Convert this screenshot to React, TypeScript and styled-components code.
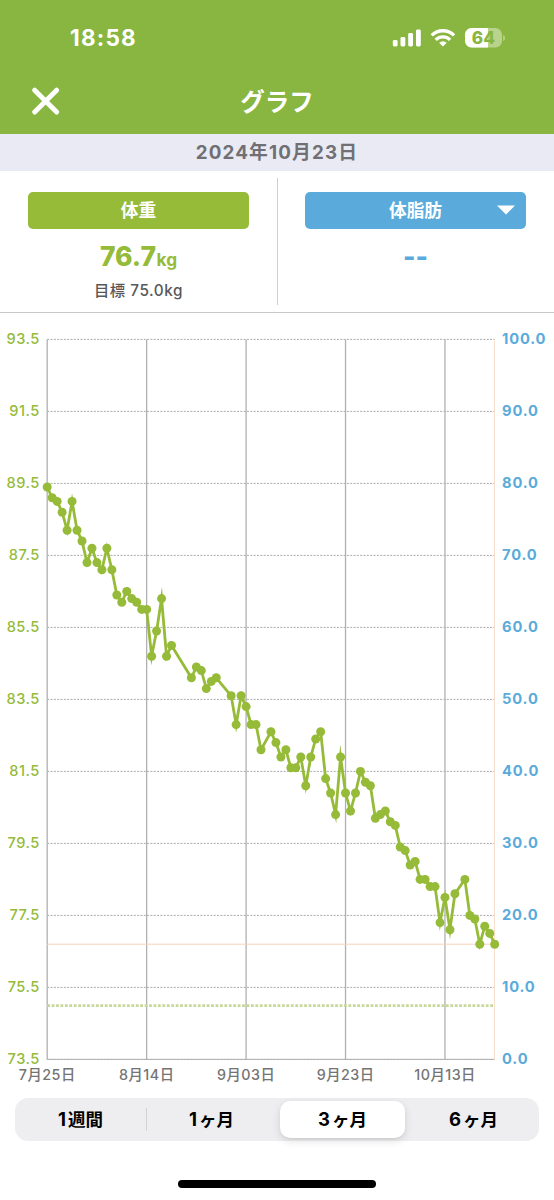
import React from "react";
import styled, { createGlobalStyle } from "styled-components";

const GREEN = "#95bb38";
const BLUE = "#5aabdb";

const GlobalStyle = createGlobalStyle`
  * { box-sizing: border-box; }
  body {
    margin: 0;
    background: #fff;
    font-family: Inter, "Noto Sans CJK JP", sans-serif;
  }
`;

const Screen = styled.main`
  width: 554px;
  height: 1200px;
  display: flex;
  flex-direction: column;
  background: #fff;
  overflow: hidden;
`;

const Header = styled.header`
  height: 134px;
  flex: none;
  background: #89b640;
  color: #fff;
`;

const StatusBar = styled.div`
  height: 68px;
  padding: 8px 49px 0 70px;
  display: flex;
  align-items: center;
  justify-content: space-between;
`;

const Clock = styled.span`
  font-size: 22.5px;
  font-weight: 750;
  line-height: 26px;
  letter-spacing: 1.2px;
`;

const StatusIcons = styled.div`
  display: flex;
  align-items: center;
  gap: 9px;
`;

const NavBar = styled.div`
  height: 66px;
  display: grid;
  grid-template-columns: 92px 1fr 92px;
  align-items: center;
`;

const CloseButton = styled.button`
  border: 0;
  padding: 0 0 0 32px;
  background: none;
  height: 28px;
  display: flex;
`;

const Title = styled.h1`
  margin: 0;
  padding-top: 1px;
  text-align: center;
  font-size: 24.5px;
  line-height: 30px;
  font-weight: 700;
`;

const DateBar = styled.div`
  height: 37px;
  flex: none;
  background: #eaeaf4;
  color: #707074;
  font-size: 18.8px;
  font-weight: 700;
  line-height: 38px;
  letter-spacing: 1.15px;
  text-align: center;
`;

const Summary = styled.section`
  height: 142px;
  flex: none;
  display: flex;
  padding-top: 7px;
  border-bottom: 1px solid #c8c8c8;
`;

const Metric = styled.div<{ $divided?: boolean }>`
  flex: 1;
  height: 127px;
  padding: 14px 28px 0;
  display: flex;
  flex-direction: column;
  align-items: center;
  box-shadow: ${(p) => (p.$divided ? "1px 0 0 #cfcfcf" : "none")};
`;

const MetricButton = styled.button<{ $color: string }>`
  position: relative;
  width: 100%;
  height: 37px;
  flex: none;
  padding: 0;
  border: 0;
  border-radius: 5px;
  background: ${(p) => p.$color};
  color: #fff;
  font: 700 17.7px/37px Inter, "Noto Sans CJK JP", sans-serif;
`;

const Caret = styled.svg`
  position: absolute;
  right: 11px;
  top: 13px;
`;

const Value = styled.div<{ $color: string }>`
  margin-top: 10px;
  height: 34px;
  line-height: 34px;
  font-size: 26.5px;
  font-weight: 800;
  color: ${(p) => p.$color};
  white-space: nowrap;
`;

const Unit = styled.span`
  font-size: 17.3px;
  font-weight: 700;
  margin-left: 0.5px;
`;

const Goal = styled.div`
  margin-top: 8px;
  font-size: 15.3px;
  line-height: 20px;
  font-weight: 500;
  color: #58585a;
  letter-spacing: 0.55px;
  white-space: nowrap;
`;

const Chart = styled.svg`
  display: block;
  flex: none;
  font-family: Inter, "Noto Sans CJK JP", sans-serif;
`;

const Segments = styled.nav`
  flex: none;
  width: 524px;
  height: 43px;
  margin: 5px 0 0 15px;
  display: flex;
  align-items: center;
  border-radius: 13px;
  background: #eeeef0;
`;

const Segment = styled.button<{ $active?: boolean }>`
  flex: 1;
  height: 37px;
  margin: 0 3.2px;
  padding: 0;
  border: 0;
  border-radius: 10px;
  background: ${(p) => (p.$active ? "#fff" : "transparent")};
  box-shadow: ${(p) => (p.$active ? "0 3px 8px rgba(0,0,0,.12), 0 1px 2px rgba(0,0,0,.06)" : "none")};
  color: #000;
  font: 600 17.5px/37px Inter, "Noto Sans CJK JP", sans-serif;
`;

const Count = styled.span`
  font-size: 18.5px;
  font-weight: 700;
  margin-right: 2px;
`;

const Separator = styled.i<{ $hidden?: boolean }>`
  width: 1px;
  height: 23px;
  margin: 0 -0.5px;
  background: ${(p) => (p.$hidden ? "transparent" : "#d2d2d5")};
`;

const HomeIndicator = styled.div`
  flex: none;
  width: 198px;
  height: 8px;
  margin: 39px auto 0;
  border-radius: 4px;
  background: #000;
`;

/* [days since 7/25, weight in kg] */
const weights: [number, number][] = [
  [0, 89.4], [1, 89.1], [2, 89.0], [3, 88.7], [4, 88.2], [5, 89.0], [6, 88.2], [7, 87.9],
  [8, 87.3], [9, 87.7], [10, 87.3], [11, 87.1], [12, 87.7], [13, 87.1], [14, 86.4], [15, 86.2],
  [16, 86.5], [17, 86.3], [18, 86.2], [19, 86.0], [20, 86.0], [21, 84.7], [22, 85.4], [23, 86.3],
  [24, 84.7], [25, 85.0], [29, 84.1], [30, 84.4], [31, 84.3], [32, 83.8], [33, 84.0], [34, 84.1],
  [37, 83.6], [38, 82.8], [39, 83.6], [40, 83.3], [41, 82.8], [42, 82.8], [43, 82.1], [45, 82.6],
  [46, 82.3], [47, 81.9], [48, 82.1], [49, 81.6], [50, 81.6], [51, 81.9], [52, 81.1], [53, 81.9],
  [54, 82.4], [55, 82.6], [56, 81.3], [57, 80.9], [58, 80.3], [59, 81.9], [60, 80.9], [61, 80.4],
  [62, 80.9], [63, 81.5], [64, 81.2], [65, 81.1], [66, 80.2], [67, 80.3], [68, 80.4], [69, 80.1],
  [70, 80.0], [71, 79.4], [72, 79.3], [73, 78.9], [74, 79.0], [75, 78.5], [76, 78.5], [77, 78.3],
  [78, 78.3], [79, 77.3], [80, 78.0], [81, 77.1], [82, 78.1], [84, 78.5], [85, 77.5], [86, 77.4],
  [87, 76.7], [88, 77.2], [89, 77.0], [90, 76.7],
];

const LEFT = 47.2;
const RIGHT = 494.7;
const TOP = 26.4;
const BOTTOM = 746.4;
const x = (day: number) => LEFT + (day / 90) * (RIGHT - LEFT);
const y = (kg: number) => TOP + (93.5 - kg) * 36;

const rows = Array.from({ length: 11 }, (_, i) => i);
const dates = ["7月25日", "8月14日", "9月03日", "9月23日", "10月13日"];

function WeightChart() {
  const points = weights.map(([d, kg]) => `${x(d)},${y(kg)}`).join(" ");
  return (
    <Chart width="554" height="780" viewBox="0 0 554 780">
      {rows.map((i) => (
        <g key={i}>
          <line x1={LEFT} x2={RIGHT} y1={TOP + i * 72} y2={TOP + i * 72} stroke="#aaa" strokeWidth="1" strokeDasharray="2 1.33" />
          <text x="39.8" y={TOP + i * 72 + 4.4} textAnchor="end" fontSize="14.6" fontWeight="550" letterSpacing="0.5" fill={GREEN}>
            {(93.5 - i * 2).toFixed(1)}
          </text>
          <text x="502" y={TOP + i * 72 + 4.4} fontSize="14.7" fontWeight="700" letterSpacing="0.85" fill={BLUE}>
            {(100 - i * 10).toFixed(1)}
          </text>
        </g>
      ))}
      {dates.map((label, i) => (
        <g key={label}>
          <line x1={x(i * 20)} x2={x(i * 20)} y1={TOP} y2={BOTTOM} stroke="#b0b0b0" strokeWidth="1.3" />
          <text x={x(i * 20) + 0.1} y="767" textAnchor="middle" fontSize="14.3" fontWeight="500" letterSpacing="0.5" fill="#747474">
            {label}
          </text>
        </g>
      ))}
      <line x1={LEFT} x2={RIGHT} y1={BOTTOM} y2={BOTTOM} stroke="#b0b0b0" strokeWidth="1" />
      <line x1={LEFT} x2={RIGHT} y1={y(75) + 0.2} y2={y(75) + 0.2} stroke="#c6d99a" strokeWidth="2.7" strokeDasharray="2.8 1.63" />
      <line x1={LEFT} x2={RIGHT} y1={y(76.7)} y2={y(76.7)} stroke="#f8d3b8" strokeWidth="1" />
      <line x1={RIGHT - 0.2} x2={RIGHT - 0.2} y1={TOP} y2={BOTTOM} stroke="#fae0cc" strokeWidth="1" />
      <polyline points={points} fill="none" stroke={GREEN} strokeWidth="2.8" strokeMiterlimit="12" />
      {weights.map(([d, kg]) => (
        <circle key={d} cx={x(d)} cy={y(kg)} r="4.5" fill={GREEN} />
      ))}
    </Chart>
  );
}

function SignalIcon() {
  return (
    <svg width="29" height="18" viewBox="0 0 29 18" fill="#fff">
      <rect x="0.8" y="11" width="4.8" height="6.5" rx="1.4" />
      <rect x="8.5" y="8" width="4.8" height="9.5" rx="1.4" />
      <rect x="16.2" y="4" width="4.8" height="13.5" rx="1.4" />
      <rect x="24" y="0.5" width="4.8" height="17" rx="1.4" />
    </svg>
  );
}

function WifiIcon() {
  return (
    <svg width="25" height="18" viewBox="0 0 25 18" fill="none" stroke="#fff" strokeWidth="3.4">
      <path d="M1.7 6.4a15.8 15.8 0 0 1 22.4 0" />
      <path d="M5.7 10.9a10.200 10.200 0 0 1 14.400 0" />
      <path d="M12.900 17.400 9.100 13.700a5.500 5.500 0 0 1 7.600 0Z" fill="#fff" stroke="none" />
    </svg>
  );
}

function BatteryIcon() {
  return (
    <svg width="41" height="20" viewBox="0 0 41 20">
      <defs>
        <clipPath id="charge">
          <rect width="24" height="20" />
        </clipPath>
      </defs>
      <rect x="1" width="37" height="19.500" rx="6.500" fill="#b8d38c" />
      <rect x="1" width="37" height="19.500" rx="6.500" fill="#fff" clipPath="url(#charge)" />
      <path d="M39.200 7v6c1.200-.5 1.800-1.600 1.800-3s-.6-2.500-1.800-3Z" fill="#b8d38c" />
      <text x="19.400" y="15.900" textAnchor="middle" fontFamily="Inter" fontSize="17.200" fontWeight="800" fill="#89b640">
        64
      </text>
    </svg>
  );
}

export default function App() {
  return (
    <Screen>
      <GlobalStyle />
      <Header>
        <StatusBar>
          <Clock>18:58</Clock>
          <StatusIcons>
            <SignalIcon />
            <WifiIcon />
            <BatteryIcon />
          </StatusIcons>
        </StatusBar>
        <NavBar>
          <CloseButton aria-label="閉じる">
            <svg width="28" height="28" viewBox="0 0 28 28" stroke="#fff" strokeWidth="4.9" strokeLinecap="round">
              <path d="M2.700 3.200 24.600 25.100M24.600 3.200 2.700 25.100" />
            </svg>
          </CloseButton>
          <Title>グラフ</Title>
        </NavBar>
      </Header>
      <DateBar>2024年10月23日</DateBar>
      <Summary>
        <Metric $divided>
          <MetricButton $color={GREEN}>体重</MetricButton>
          <Value $color={GREEN}>
            76.7<Unit>kg</Unit>
          </Value>
          <Goal>目標 75.0kg</Goal>
        </Metric>
        <Metric>
          <MetricButton $color={BLUE}>
            体脂肪
            <Caret width="18" height="10" viewBox="0 0 18 10">
              <path d="M0 0.500h18L9 9.500Z" fill="#fff" />
            </Caret>
          </MetricButton>
          <Value $color={BLUE}>--</Value>
        </Metric>
      </Summary>
      <WeightChart />
      <Segments>
        <Segment><Count>1</Count>週間</Segment>
        <Separator />
        <Segment><Count>1</Count>ヶ月</Segment>
        <Separator $hidden />
        <Segment $active><Count>3</Count>ヶ月</Segment>
        <Separator $hidden />
        <Segment><Count>6</Count>ヶ月</Segment>
      </Segments>
      <HomeIndicator />
    </Screen>
  );
}
